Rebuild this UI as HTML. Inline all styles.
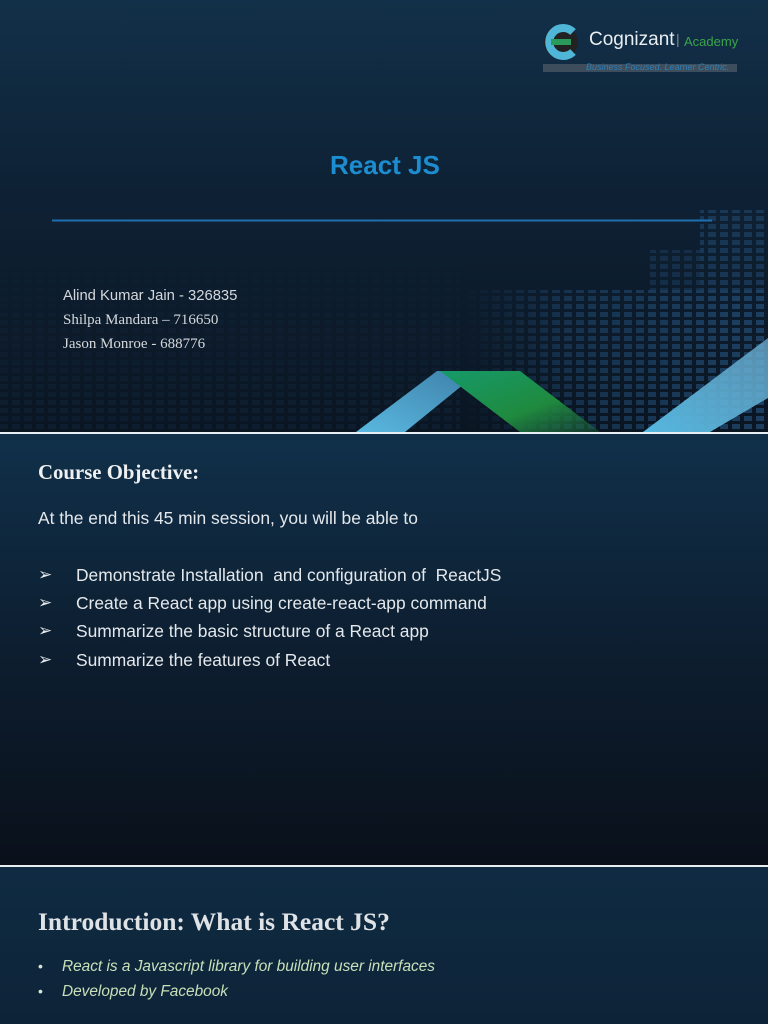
<!DOCTYPE html>
<html><head><meta charset="utf-8"><style>
*{margin:0;padding:0;box-sizing:border-box}
body{width:768px;height:1024px;overflow:hidden;background:#0b1420;font-family:"Liberation Sans",sans-serif;position:relative}
.s1{position:absolute;left:0;top:0;width:768px;height:432px;background:linear-gradient(180deg,#123049 0%,#0e2134 45%,#0a1522 100%);overflow:hidden}
.s2{position:absolute;left:0;top:434px;width:768px;height:431px;background:linear-gradient(180deg,#10304a 0%,#0d1e30 50%,#0a101a 100%)}
.s3{position:absolute;left:0;top:867px;width:768px;height:157px;background:linear-gradient(180deg,#0f2b42 0%,#0d2338 100%)}
.line{position:absolute;left:0;width:768px;height:2px;background:#e8eef2}
.t{position:absolute;white-space:nowrap}
.serif{font-family:"Liberation Serif",serif}
</style></head><body>
<div class="s1">
  <svg width="768" height="432" style="position:absolute;left:0;top:0">
    <defs>
      <pattern id="px" width="12" height="8" patternUnits="userSpaceOnUse">
        <rect x="0" y="0" width="8" height="5" fill="#24507a"/>
      </pattern>
      <linearGradient id="fadeL" x1="0" y1="0" x2="1" y2="0"><stop offset="0" stop-color="#fff" stop-opacity="0"/><stop offset=".35" stop-color="#fff" stop-opacity=".45"/><stop offset="1" stop-color="#fff" stop-opacity=".7"/></linearGradient>
      <linearGradient id="fadeB" x1="0" y1="0" x2="0" y2="1"><stop offset="0" stop-color="#fff" stop-opacity="0"/><stop offset="1" stop-color="#fff" stop-opacity=".15"/></linearGradient>
      <mask id="m1"><rect x="460" y="290" width="308" height="142" fill="url(#fadeL)"/><rect x="700" y="210" width="68" height="80" fill="#fff" fill-opacity=".5"/><rect x="650" y="250" width="50" height="40" fill="#fff" fill-opacity=".35"/><rect x="0" y="240" width="460" height="192" fill="url(#fadeB)"/></mask>
      <linearGradient id="b1" x1="0" y1="1" x2="1" y2="0"><stop offset="0" stop-color="#5ab8e0"/><stop offset="1" stop-color="#3d7fa8"/></linearGradient>
      <linearGradient id="gr" x1="0" y1="0" x2="1" y2="1"><stop offset="0" stop-color="#169a6a"/><stop offset=".6" stop-color="#1f8a3e"/><stop offset="1" stop-color="#1f6a40" stop-opacity=".4"/></linearGradient>
      <linearGradient id="b2" x1="0" y1="1" x2="1" y2="0"><stop offset="0" stop-color="#55b8e0"/><stop offset="1" stop-color="#6aa8cc" stop-opacity=".8"/></linearGradient>
    </defs>
    <rect x="0" y="200" width="768" height="232" fill="url(#px)" mask="url(#m1)"/>
    <polygon points="356,432 437,371 480,371 405,432" fill="url(#b1)"/>
    <polygon points="440,371 520,371 600,432 520,432" fill="url(#gr)"/>
    <polygon points="643,432 768,338 768,398 710,432" fill="url(#b2)"/>
    <line x1="52" y1="220.5" x2="712" y2="220.5" stroke="#1e6fb0" stroke-width="2"/>
  </svg>
  <svg width="40" height="40" style="position:absolute;left:543px;top:22px" viewBox="0 0 40 40">
    <circle cx="18" cy="20" r="17" fill="#222"/>
    <path d="M30 10 A14 14 0 1 0 30 30" stroke="#4fb6d8" stroke-width="8" fill="none"/>
    <path d="M8 20 L28 20" stroke="#2a9a5a" stroke-width="6"/>
  </svg>
  <div class="t" style="left:589px;top:29px;font-size:19px;color:#e8eef2">Cognizant</div>
  <div class="t" style="left:676px;top:31px;font-size:14px;color:#888">|</div>
  <div class="t" style="left:684px;top:34px;font-size:13px;color:#3aa548">Academy</div>
  <div style="position:absolute;left:543px;top:64px;width:194px;height:8px;background:#3d4d5c"></div>
  <div class="t" style="left:586px;top:62px;font-size:9px;font-style:italic;color:#2f7fb6">Business Focused. Learner Centric.</div>
  <div class="t" style="left:330px;top:150px;font-size:26px;font-weight:bold;color:#1c8dd0">React JS</div>
  <div class="t" style="left:63px;top:288px;font-size:14.8px;color:#d4d8dc">Alind Kumar Jain - 326835</div>
  <div class="t serif" style="left:63px;top:312px;font-size:15px;color:#d4d8dc">Shilpa Mandara – 716650</div>
  <div class="t serif" style="left:63px;top:336px;font-size:15px;color:#d4d8dc">Jason Monroe - 688776</div>
</div>
<div class="line" style="top:432px"></div>
<div class="s2">
  <div class="t serif" style="left:38px;top:27px;font-size:20.8px;font-weight:bold;color:#eef0f2">Course Objective:</div>
  <div class="t" style="left:38px;top:74px;font-size:17.4px;color:#e4e8ec">At the end this 45 min session, you will be able to</div>
  <div class="t" style="left:38px;top:131px;font-size:17px;color:#e4e8ec">➢</div><div class="t" style="left:76px;top:131px;font-size:17.4px;color:#e4e8ec">Demonstrate Installation &nbsp;and configuration of &nbsp;ReactJS</div>
  <div class="t" style="left:38px;top:159px;font-size:17px;color:#e4e8ec">➢</div><div class="t" style="left:76px;top:159px;font-size:17.4px;color:#e4e8ec">Create a React app using create-react-app command</div>
  <div class="t" style="left:38px;top:187px;font-size:17px;color:#e4e8ec">➢</div><div class="t" style="left:76px;top:187px;font-size:17.4px;color:#e4e8ec">Summarize the basic structure of a React app</div>
  <div class="t" style="left:38px;top:216px;font-size:17px;color:#e4e8ec">➢</div><div class="t" style="left:76px;top:216px;font-size:17.4px;color:#e4e8ec">Summarize the features of React</div>
</div>
<div class="line" style="top:865px"></div>
<div class="s3">
  <div class="t serif" style="left:38px;top:40px;font-size:25.5px;font-weight:bold;color:#dfe3e6">Introduction: What is React JS?</div>
  <div class="t" style="left:38px;top:91px;font-size:14px;color:#d8e8d0">•</div>
  <div class="t" style="left:62px;top:91px;font-size:15.4px;font-style:italic;color:#c8e0b8">React is a Javascript library for building user interfaces</div>
  <div class="t" style="left:38px;top:116px;font-size:14px;color:#d8e8d0">•</div>
  <div class="t" style="left:62px;top:116px;font-size:15.4px;font-style:italic;color:#c8e0b8">Developed by Facebook</div>
</div>
</body></html>
